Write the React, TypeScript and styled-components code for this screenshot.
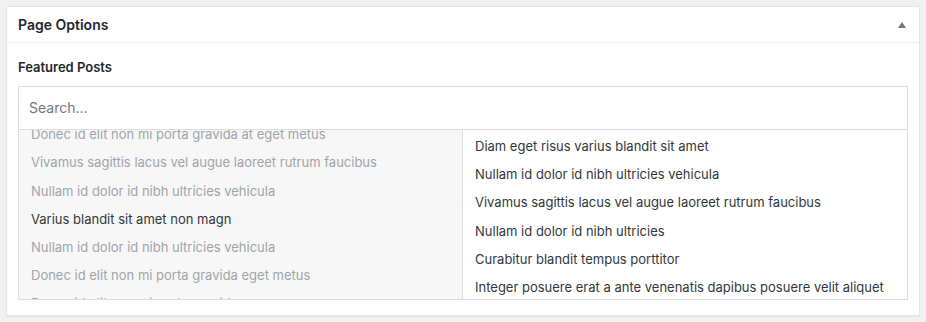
import { useEffect, useRef } from 'react';
import styled, { createGlobalStyle } from 'styled-components';

const GlobalStyle = createGlobalStyle`
  html, body {
    margin: 0;
    padding: 0;
    background: #f1f1f1;
  }
  body {
    font-family: Inter, 'Noto Sans', sans-serif;
    color: #32373c;
  }
`;

const Panel = styled.div`
  margin: 6px;
  width: 914px;
  height: 310px;
  box-sizing: border-box;
  background: #fff;
  border: 1px solid #e5e5e5;
  box-shadow: 0 1px 1px rgba(0, 0, 0, 0.04);
`;

const Header = styled.div`
  height: 35px;
  display: flex;
  align-items: center;
  justify-content: space-between;
  padding: 0 13px 0 11px;
  border-bottom: 1px solid #eee;
`;

const Title = styled.h2`
  margin: 0;
  font-size: 14px;
  font-weight: 600;
  color: #23282d;
`;

const Toggle = styled.span`
  width: 0;
  height: 0;
  border-left: 4px solid transparent;
  border-right: 4px solid transparent;
  border-bottom: 6px solid #72777c;
`;

const Body = styled.div`
  padding: 16px 11px 0;
`;

const Label = styled.label`
  display: block;
  font-size: 13px;
  font-weight: 600;
  color: #23282d;
  line-height: 16px;
  margin-bottom: 11px;
`;

const Field = styled.div`
  border: 1px solid #ddd;
`;

const SearchBar = styled.div`
  height: 42px;
  display: flex;
  align-items: center;
  padding: 0 10px;
  border-bottom: 1px solid #ddd;
`;

const SearchInput = styled.input`
  flex: 1;
  border: 0;
  outline: none;
  font-family: inherit;
  font-size: 14px;
  line-height: 20px;
  color: #32373c;
  padding: 0;
  background: transparent;

  &::placeholder {
    color: #72777c;
  }
`;

const Columns = styled.div`
  display: grid;
  grid-template-columns: 444px 1fr;
  height: 169px;
`;

const List = styled.ul<{ $choices?: boolean }>`
  margin: 0;
  padding: ${p => (p.$choices ? '0' : '2px 0 0')};
  list-style: none;
  overflow: hidden;
  background: ${p => (p.$choices ? '#f7f7f7' : '#fff')};
  border-right: ${p => (p.$choices ? '1px solid #ddd' : '0')};
`;

const Item = styled.li<{ $disabled?: boolean }>`
  padding: 5px 12px;
  font-size: 13px;
  line-height: 18.2px;
  white-space: nowrap;
  color: ${p => (p.$disabled ? '#a0a5aa' : '#32373c')};
`;

const choices = [
  { text: 'Diam eget risus varius blandit sit amet', disabled: true },
  { text: 'Donec id elit non mi porta gravida at eget metus', disabled: true },
  { text: 'Vivamus sagittis lacus vel augue laoreet rutrum faucibus', disabled: true },
  { text: 'Nullam id dolor id nibh ultricies vehicula', disabled: true },
  { text: 'Varius blandit sit amet non magn', disabled: false },
  { text: 'Nullam id dolor id nibh ultricies vehicula', disabled: true },
  { text: 'Donec id elit non mi porta gravida eget metus', disabled: true },
  { text: 'Donec id elit non mi porta gravida', disabled: true },
];

const selected = [
  'Diam eget risus varius blandit sit amet',
  'Nullam id dolor id nibh ultricies vehicula',
  'Vivamus sagittis lacus vel augue laoreet rutrum faucibus',
  'Nullam id dolor id nibh ultricies',
  'Curabitur blandit tempus porttitor',
  'Integer posuere erat a ante venenatis dapibus posuere velit aliquet',
];

export default function App() {
  const choicesRef = useRef<HTMLUListElement>(null);

  useEffect(() => {
    // the left list is shown scrolled a little past its first item
    if (choicesRef.current) choicesRef.current.scrollTop = 38;
  }, []);

  return (
    <>
      <GlobalStyle />
      <Panel>
        <Header>
          <Title>Page Options</Title>
          <Toggle />
        </Header>
        <Body>
          <Label>Featured Posts</Label>
          <Field>
            <SearchBar>
              <SearchInput placeholder="Search..." />
            </SearchBar>
            <Columns>
              <List $choices ref={choicesRef}>
                {choices.map((c, i) => (
                  <Item key={i} $disabled={c.disabled}>{c.text}</Item>
                ))}
              </List>
              <List>
                {selected.map((s, i) => (
                  <Item key={i}>{s}</Item>
                ))}
              </List>
            </Columns>
          </Field>
        </Body>
      </Panel>
    </>
  );
}
